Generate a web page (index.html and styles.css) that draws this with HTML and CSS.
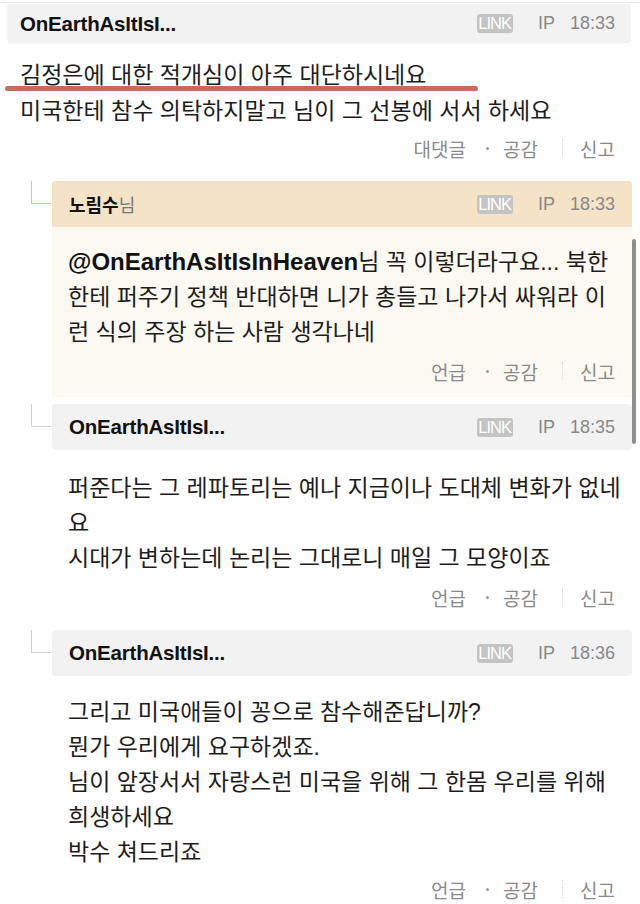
FILE: index.html
```html
<!DOCTYPE html>
<html lang="ko">
<head>
<meta charset="utf-8">
<title>댓글</title>
<link rel="stylesheet" href="styles.css">
</head>
<body>
<div class="page">
  <div class="topline"></div>

  <div class="comment">
    <div class="head head-top">
      <span class="name">OnEarthAsItIsI...</span>
      <span class="meta"><span class="link">LINK</span><span class="ip">IP</span><span class="time">18:33</span></span>
    </div>
    <div class="body body-top">
      <p class="text">김정은에 대한 적개심이 아주 대단하시네요<br>미국한테 참수 의탁하지말고 님이 그 선봉에 서서 하세요</p>
      <div class="mark"></div>
      <div class="actions"><span>대댓글</span><span class="dot"></span><span>공감</span><span class="sep"></span><span>신고</span></div>
    </div>
  </div>

  <div class="reply reply-hl">
    <div class="conn"></div>
    <div class="head">
      <span class="name-ko"><b>노림수</b><span class="nim">님</span></span>
      <span class="meta"><span class="link">LINK</span><span class="ip">IP</span><span class="time">18:33</span></span>
    </div>
    <div class="body">
      <p class="text"><b class="mention">@OnEarthAsItIsInHeaven</b>님 꼭 이렇더라구요... 북한<br>한테 퍼주기 정책 반대하면 니가 총들고 나가서 싸워라 이<br>런 식의 주장 하는 사람 생각나네</p>
      <div class="actions"><span>언급</span><span class="dot"></span><span>공감</span><span class="sep"></span><span>신고</span></div>
    </div>
  </div>

  <div class="reply reply-2">
    <div class="conn"></div>
    <div class="head">
      <span class="name">OnEarthAsItIsI...</span>
      <span class="meta"><span class="link">LINK</span><span class="ip">IP</span><span class="time">18:35</span></span>
    </div>
    <div class="body">
      <p class="text">퍼준다는 그 레파토리는 예나 지금이나 도대체 변화가 없네<br>요<br>시대가 변하는데 논리는 그대로니 매일 그 모양이죠</p>
      <div class="actions"><span>언급</span><span class="dot"></span><span>공감</span><span class="sep"></span><span>신고</span></div>
    </div>
  </div>

  <div class="reply reply-3">
    <div class="conn"></div>
    <div class="head">
      <span class="name">OnEarthAsItIsI...</span>
      <span class="meta"><span class="link">LINK</span><span class="ip">IP</span><span class="time">18:36</span></span>
    </div>
    <div class="body">
      <p class="text">그리고 미국애들이 꽁으로 참수해준답니까?<br>뭔가 우리에게 요구하겠죠.<br>님이 앞장서서 자랑스런 미국을 위해 그 한몸 우리를 위해<br>희생하세요<br>박수 쳐드리죠</p>
      <div class="actions"><span>언급</span><span class="dot"></span><span>공감</span><span class="sep"></span><span>신고</span></div>
    </div>
  </div>

  <div class="scrollbar"></div>
</div>
</body>
</html>
```

FILE: styles.css
```css
* { box-sizing: border-box; }
html, body { margin: 0; padding: 0; background: #fff; }
body {
  font-family: "Liberation Sans", "Noto Sans CJK KR", sans-serif;
  color: #1c1c1c;
  width: 640px;
  overflow: hidden;
}
.page { position: relative; }
.topline { height: 1px; background: #e6e6e6; margin-top: 2px; }

.head {
  display: flex;
  align-items: center;
  justify-content: space-between;
  background: #f2f2f2;
  border-radius: 4px;
}
.head-top { margin: 1px 9px 0 7px; height: 39px; padding: 0 16px 0 13px; }
.name { font-weight: 700; font-size: 20.5px; color: #111; letter-spacing: -0.2px; }
.name-ko { font-family: "Noto Sans CJK KR", sans-serif; font-size: 18px; color: #111; }
.name-ko b { font-weight: 700; }
.nim { color: #777; font-weight: 400; }
.meta { display: flex; align-items: center; }
.link {
  font-family: "Liberation Sans", sans-serif;
  font-size: 16.5px;
  letter-spacing: -1px;
  color: #fff;
  background: #c4c4c4;
  border-radius: 3px;
  padding: 0 2px 0 1px;
  height: 19px;
  line-height: 19px;
}
.ip { margin-left: 25px; font-size: 18px; color: #888; }
.time { margin-left: 15px; font-size: 18px; color: #888; }

.body { position: relative; }
.body-top { padding: 14px 25px 0 20px; }
.body-top .text { line-height: 36px; }
.text { margin: 0; font-size: 23px; line-height: 35px; white-space: nowrap; }
.mention { font-weight: 700; font-size: 24px; color: #111; }
.mark {
  position: absolute;
  left: 5px;
  top: 43px;
  width: 473px;
  height: 5px;
  border-radius: 3px;
  background: #c96a5d;
}
.actions {
  display: flex;
  justify-content: flex-end;
  align-items: center;
  height: 22px;
  margin-top: 10px;
  font-family: "Noto Sans CJK KR", sans-serif;
  font-size: 19px;
  color: #8a8a8a;
}
.body-top .actions { margin-top: 8px; }
.dot { width: 3px; height: 3px; border-radius: 50%; background: #999; margin: 0 14px 0 20px; }
.sep { width: 1px; height: 18px; border-left: 1px dotted #d6d6d6; margin: 0 17px 0 24px; }

.reply { position: relative; margin: 22px 8px 0 52px; }
.reply .head { height: 46px; padding: 0 17px 0 17px; }
.reply .body { padding: 21px 17px 0 16px; }
.reply-hl .head { background: #f4e3c7; border-radius: 4px 4px 0 0; }
.reply-hl .body { background: #fcf9f3; padding: 17px 17px 15px 16px; }
.reply-2 { margin-top: 7px; }
.reply-3 { margin-top: 22px; }
.reply-3 .body { padding-top: 19px; }
.reply-3 .actions { margin-top: 8px; }
.conn {
  position: absolute;
  left: -21px;
  top: 0;
  width: 20px;
  height: 23px;
  border-left: 1px solid #cfcfcf;
  border-bottom: 1px solid #cfcfcf;
}
.reply-hl .conn { border-color: #e4c66e; }

.scrollbar {
  position: absolute;
  left: 632px;
  top: 237px;
  width: 4px;
  height: 205px;
  background: #8e8e8e;
  border-radius: 2px;
}
```
